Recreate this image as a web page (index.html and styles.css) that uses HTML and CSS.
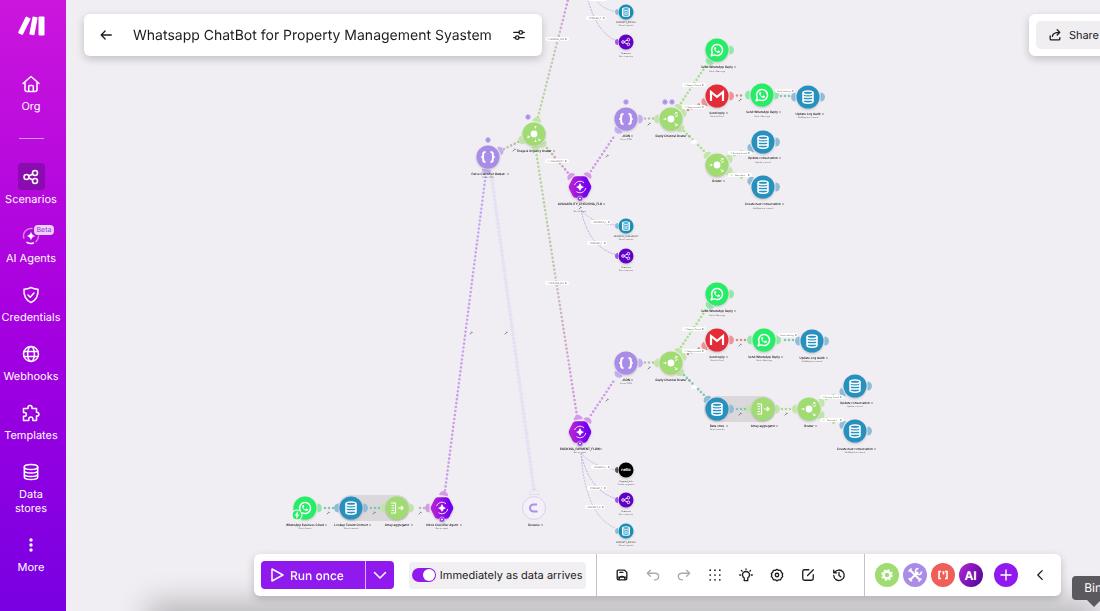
FILE: index.html
```
<!DOCTYPE html>
<html lang="en">

<head>
    <meta charset="utf-8">
    <meta name="viewport" content="width=device-width, initial-scale=1.0">
    <title>Whatsapp ChatBot for Property Management Syastem</title>
    <link rel="stylesheet" href="styles.css">
</head>

<body>

    <nav class="sidebar">
        <a class="logo" href="#" aria-label="Make">
            <svg width="27" height="20" viewBox="0 0 27 20"><path d="M7.5 1.2 Q8 .4 8.800 .7 L12 2.300 Q12.800 2.700 12.400 3.500 L5 18.300 Q4.500 19.200 3.700 18.800 L.6 17.200 Q-.1 16.800 .3 16z" /><path d="M14.500 1.200 Q14.700 .4 15.500 .5 L18.800 1.200 Q19.700 1.400 19.500 2.200 L16.500 18.500 Q16.300 19.300 15.400 19.200 L12 18.600 Q11.200 18.400 11.400 17.500z" /><rect x="20.500" y=".5" width="6" height="19" rx="1" /></svg>
        </a>
        <a class="item" href="#">
            <span class="icon"><svg viewBox="0 0 18 18"><path d="M1 8.500 9 1.500l8 7M3 7v7.500A2 2 0 0 0 5 16.500h8a2 2 0 0 0 2-2V7M6.700 16V11.500a1 1 0 0 1 1-1h2.600a1 1 0 0 1 1 1V16" /></svg></span>
            <span class="label">Org</span>
        </a>
        <hr>
        <a class="item active" href="#">
            <span class="icon"><svg viewBox="0 0 18 18"><circle cx="4.500" cy="9" r="2.500" /><circle cx="13" cy="5" r="2.500" /><circle cx="13" cy="13" r="2.500" /><path d="m6.800 8 4-2M6.800 10l4 2" /></svg></span>
            <span class="label">Scenarios</span>
        </a>
        <a class="item" href="#">
            <span class="icon"><svg viewBox="0 0 18 18"><path class="soft" d="M1.800 11A7.500 7.500 0 0 1 10 1.600" /><path class="soft" d="M16.500 9a7.500 7.500 0 0 1-2.500 5.600" /><path d="M11.500 16A7.500 7.500 0 0 1 5 15.300" /><path class="solid" d="M9 4.500q.6 3.900 4.500 4.500-3.900.6-4.500 4.500Q8.400 9.600 4.500 9 8.400 8.400 9 4.500z" /></svg><span class="beta">Beta</span></span>
            <span class="label">AI Agents</span>
        </a>
        <a class="item" href="#">
            <span class="icon"><svg viewBox="0 0 18 18"><path d="M9 1.500c2.500 1.300 4.500 1.600 7 1.700.4 5.500-1 10.500-7 13.300C3 13.700 1.600 8.700 2 3.200c2.500-.1 4.500-.4 7-1.700zM6 9l2.200 2.200L12 7" /></svg></span>
            <span class="label">Credentials</span>
        </a>
        <a class="item" href="#">
            <span class="icon"><svg viewBox="0 0 18 18"><circle cx="9" cy="9" r="7.500" /><ellipse cx="9" cy="9" rx="3.400" ry="7.500" /><path d="M2 6.500h14M2 11.500h14" /></svg></span>
            <span class="label">Webhooks</span>
        </a>
        <a class="item" href="#">
            <span class="icon"><svg viewBox="0 0 18 18"><path d="M1.500 4.500H6V3.400a2 2 0 0 1 4 0v1.100h4.500v3.800H15a1.900 1.900 0 0 1 0 3.800h-.5v4.400h-3.700V15a2 2 0 0 0-4 0v1.500H1.500v-4.200h1a1.900 1.900 0 0 0 0-3.800h-1z" /></svg></span>
            <span class="label">Templates</span>
        </a>
        <a class="item" href="#">
            <span class="icon"><svg viewBox="0 0 18 18"><ellipse cx="9" cy="4" rx="6.700" ry="2.500" /><path d="M2.300 4v10c0 1.400 3 2.500 6.700 2.500s6.700-1.100 6.700-2.500V4M2.300 7.500C2.300 8.900 5.300 10 9 10s6.700-1.100 6.700-2.500M2.300 11c0 1.400 3 2.500 6.700 2.500s6.700-1.100 6.700-2.500" /></svg></span>
            <span class="label">Data<br>stores</span>
        </a>
        <a class="item" href="#">
            <span class="icon"><svg viewBox="0 0 18 18"><circle class="solid" cx="9" cy="4" r="1.700" /><circle class="solid" cx="9" cy="9" r="1.700" /><circle class="solid" cx="9" cy="14" r="1.700" /></svg></span>
            <span class="label">More</span>
        </a>
    </nav>

    <main class="editor">

        <svg class="canvas" viewBox="66 0 1034 611" preserveAspectRatio="xMinYMin slice">
            <defs>
                <linearGradient id="agentFill"><stop offset="0" stop-color="#b01fd8" /><stop offset="1" stop-color="#7300f0" /></linearGradient>
                <linearGradient id="up" gradientUnits="userSpaceOnUse" x1="538" y1="117" x2="568" y2="0"><stop offset="0" stop-color="#b4dc98" /><stop offset="0.600" stop-color="#c9c2be" /><stop offset="1" stop-color="#d296e4" /></linearGradient>
                <linearGradient id="down" gradientUnits="userSpaceOnUse" x1="536" y1="150" x2="577" y2="418"><stop offset="0" stop-color="#b0dc92" /><stop offset="0.500" stop-color="#c8bcbc" /><stop offset="1" stop-color="#d296e4" /></linearGradient>
                <linearGradient id="toAgent" gradientUnits="userSpaceOnUse" x1="545" y1="147" x2="571" y2="175"><stop offset="0" stop-color="#b9c9a0" /><stop offset="1" stop-color="#cf86e4" /></linearGradient>
                <linearGradient id="long" gradientUnits="userSpaceOnUse" x1="486" y1="172" x2="445" y2="493"><stop offset="0" stop-color="#c3aaf0" /><stop offset="1" stop-color="#cf98e6" /></linearGradient>

                <path id="ear" d="M12.500-4.500a4.500 4.500 0 0 1 0 9z" />
                <path id="earSmall" d="M-8-3a3 3 0 0 0 0 6z" />
                <g id="braces">
                    <circle r="11.500" fill="#a98be8" />
                    <path class="bold" d="M-2.500-5q-2.300 0-2.300 2v1.500Q-4.800 0-6 0-4.800 0-4.800 1.500V3q0 2 2.300 2M2.500-5q2.300 0 2.300 2v1.500Q4.800 0 6 0 4.800 0 4.800 1.500V3q0 2-2.300 2" />
                </g>
                <g id="router">
                    <circle r="11.500" fill="#a0dc72" />
                    <circle r="3.400" fill="#fff" />
                    <path class="fine" d="M-7.500 0h2.500M-6-1l1.200 1L-6 1M3.500-4 6-6.500M4.200-6.500H6v1.700M4-2.500l3-1M3.500 4 6 6.500M4.200 6.500H6V4.800" />
                </g>
                <g id="routerDown">
                    <circle r="11.500" fill="#a0dc72" />
                    <circle r="3.400" fill="#fff" />
                    <path class="fine" d="M-7 3.500l2.200-1M-6.500 2l2 .4-.8 1.800M1.500-5.500v-2.500M.5-7l1-1 1 1M1.500 5.500v2.500M.5 7l1 1 1-1M4 4.500l1.800 1.800M4.500 6.500h1.500V5" />
                </g>
                <g id="whatsapp">
                    <circle r="11.500" fill="#25ee66" />
                    <path class="line" d="M-5.800 5.800-4.800 2.600A5.500 5.500 0 1 1-2.500 4.900z" />
                    <path fill="#fff" d="M-2-3q-1.200.6-.9 2Q-2.200 1.800.8 2.900q1.500.3 2.200-.9.200-.7-.2-.9L1.300.5.300 1.400Q-1 .8-1.500-.6l.8-.8-.6-1.500z" />
                </g>
                <g id="gmail">
                    <circle r="11.500" fill="#e42b38" />
                    <path d="M-6 5v-9L0 .8 6-4v9" fill="none" stroke="#fff" stroke-width="2.200" />
                </g>
                <g id="store">
                    <path class="line" d="M-5-4.200V4.300C-5 6.800 5 6.800 5 4.300V-4.200M-5-1.400C-5 .8 5 .8 5-1.400M-5 1.400C-5 3.600 5 3.600 5 1.400" />
                    <ellipse class="line" cy="-4.200" rx="5" ry="1.800" />
                </g>
                <g id="db"><circle r="11.500" fill="#2690bf" /><use href="#store" /></g>
                <g id="dbSmall"><circle r="7.500" fill="#158fb8" /><use href="#store" transform="scale(.7)" /></g>
                <g id="share">
                    <circle r="7.500" fill="#6200c8" />
                    <circle class="fine" cx="-3" r="1.300" /><circle class="fine" cx="2.400" cy="-2.300" r="1.300" /><circle class="fine" cx="2.400" cy="2.300" r="1.300" />
                    <path class="fine" d="m-1.800-.5 3-1.300M-1.800.5l3 1.300" />
                </g>
                <g id="aggregator">
                    <circle r="11.500" fill="#a0dc72" />
                    <path class="thin" d="M-6-5h4.500V5H-6M-5.500-2.500h2.500M-5.500 0h2.500M-5.500 2.500h2.500M1 0h5M4-2l2 2-2 2" />
                </g>
                <g id="agent">
                    <path d="M-7.500 0-4-7h8l3.500 7L4 7h-8z" fill="url(#agentFill)" stroke="url(#agentFill)" stroke-width="7.500" stroke-linejoin="round" />
                    <path class="fine" d="M-5.400-2A5.800 5.800 0 0 1 4-4.200M5.700 1A5.800 5.800 0 0 1-3.500 4.600" />
                    <path fill="#fff" d="M0-4Q.8-.8 4 0 .8.8 0 4-.8.800-4 0-.8-.8 0-4z" />
                    <circle cy="11.500" r="2.600" fill="#8e2be6" stroke="#e8d8fa" stroke-width=".5" />
                    <path class="fine" d="M-1 11.500h2M0 10.500v2" />
                </g>
                <g id="filterDot">
                    <circle r="2.200" fill="#c3b0f2" stroke="#a184ea" stroke-width=".8" />
                    <path d="m-.8-.8 1.600 1.600M.8-.8-.8.800" stroke="#7b55d8" stroke-width=".5" />
                </g>
                <path id="wrench" d="m-1.200 1.300 2-2M.4-1.300l1 1" stroke="#555" stroke-width=".8" />
                <g id="pill">
                    <rect x="-12" y="-2" width="24" height="4" rx="2" fill="#fff" />
                    <path d="M-9.500 0h2" stroke="#a9dc86" stroke-width=".8" /><path d="M8 0h1.500" stroke="#666" stroke-width="1" />
                </g>
                <g id="pillShort">
                    <rect x="-10" y="-2" width="20" height="4" rx="2" fill="#fff" />
                    <path d="M7 0h1.500" stroke="#666" stroke-width="1" />
                </g>
            </defs>

            <!-- grouped modules -->
            <rect class="group" x="338" y="495" width="72" height="26" rx="13" />
            <rect class="group" x="704" y="396" width="72" height="26" rx="13" />

            <!-- links -->
            <g class="links">
                <path d="M538 117 568 0" stroke="url(#up)" />
                <path d="m536 151 41 265" stroke="url(#down)" />
                <path d="m547 148 22 26" stroke="url(#toAgent)" />
                <path d="M486 173 445 491" stroke="url(#long)" />
                <path class="faint" d="m491 172 43 318" />
                <path class="olive" d="m504 149 16-8" />
                <path class="magenta" d="m591 171 24-36M591 415l24-36" />
                <path class="olive" d="M645 118.500h9M645 362.500h9M420 508h9" />
                <path class="lime" d="m681 103 26-39M681 347l26-39M684 131l22 22" />
                <path class="lime" d="M731 157l11-6M731 172l11 6M782 409h9M823 401l11-6M823 417l11 6" />
                <path class="rose" d="m688 110 12-6M688 354l12-6M737 95.500h8M737 340h9" />
                <path class="teal" d="M781 96h9M785 340h9M684 375l22 22M737 409h9M325 508h9M371 508h9" />
            </g>
            <g class="curves">
                <path class="blue" d="M581 210q12 14 36 15M581 453q10 13 36 17M590-8q10 18 28 20" />
                <path d="M581 210q8 38 36 45M581 453q8 38 36 46M588 0q9 33 29 41" />
                <path class="blue" d="M581 453q4 62 34 75" />
            </g>

            <!-- connectors round the modules -->
            <g fill="#c4aff0">
                <use href="#ear" transform="translate(488 157) rotate(-27)" /><use href="#ear" transform="translate(488 157) rotate(97)" />
                <use href="#ear" transform="translate(626 119)" /><use href="#ear" transform="translate(626 119) rotate(124)" />
                <use href="#ear" transform="translate(626 363)" /><use href="#ear" transform="translate(626 363) rotate(124)" />
            </g>
            <g fill="#c2e5a8">
                <use href="#ear" transform="translate(534 134) rotate(153)" /><use href="#ear" transform="translate(534 134) rotate(-78)" />
                <use href="#ear" transform="translate(534 134) rotate(49)" /><use href="#ear" transform="translate(534 134) rotate(82)" />
                <use href="#ear" transform="translate(671 119) rotate(180)" /><use href="#ear" transform="translate(671 119) rotate(-57)" />
                <use href="#ear" transform="translate(671 119) rotate(-27)" /><use href="#ear" transform="translate(671 119) rotate(45)" />
                <use href="#ear" transform="translate(671 363) rotate(180)" /><use href="#ear" transform="translate(671 363) rotate(-57)" />
                <use href="#ear" transform="translate(671 363) rotate(-27)" /><use href="#ear" transform="translate(671 363) rotate(45)" />
                <use href="#ear" transform="translate(717 165) rotate(225)" /><use href="#ear" transform="translate(717 165) rotate(-27)" /><use href="#ear" transform="translate(717 165) rotate(27)" />
                <use href="#ear" transform="translate(763 409) rotate(180)" /><use href="#ear" transform="translate(763 409)" />
                <use href="#ear" transform="translate(809 409) rotate(180)" /><use href="#ear" transform="translate(809 409) rotate(-27)" /><use href="#ear" transform="translate(809 409) rotate(27)" />
                <use href="#ear" transform="translate(397 508) rotate(180)" /><use href="#ear" transform="translate(397 508)" />
            </g>
            <g fill="#8eeaa8">
                <use href="#ear" transform="translate(717 50) rotate(123)" /><use href="#ear" transform="translate(717 50)" />
                <use href="#ear" transform="translate(762 95) rotate(180)" /><use href="#ear" transform="translate(762 95)" />
                <use href="#ear" transform="translate(717 294) rotate(123)" /><use href="#ear" transform="translate(717 294)" />
                <use href="#ear" transform="translate(764 340) rotate(180)" /><use href="#ear" transform="translate(764 340)" />
                <use href="#ear" transform="translate(305 508)" />
            </g>
            <g fill="#ee9298">
                <use href="#ear" transform="translate(717 96) rotate(153)" /><use href="#ear" transform="translate(717 96)" />
                <use href="#ear" transform="translate(717 340) rotate(153)" /><use href="#ear" transform="translate(717 340)" />
            </g>
            <g fill="#8fbdd8">
                <use href="#ear" transform="translate(808 97) rotate(180)" /><use href="#ear" transform="translate(808 97)" />
                <use href="#ear" transform="translate(763 142) rotate(153)" /><use href="#ear" transform="translate(763 142)" />
                <use href="#ear" transform="translate(763 187) rotate(-153)" /><use href="#ear" transform="translate(763 187)" />
                <use href="#ear" transform="translate(812 341) rotate(180)" /><use href="#ear" transform="translate(812 341)" />
                <use href="#ear" transform="translate(717 409) rotate(225)" /><use href="#ear" transform="translate(717 409)" />
                <use href="#ear" transform="translate(855 386) rotate(153)" /><use href="#ear" transform="translate(855 386)" />
                <use href="#ear" transform="translate(855 431) rotate(-153)" /><use href="#ear" transform="translate(855 431)" />
                <use href="#ear" transform="translate(351 508) rotate(180)" /><use href="#ear" transform="translate(351 508)" />
                <use href="#earSmall" x="626" y="12" /><use href="#earSmall" x="626" y="226" /><use href="#earSmall" x="626" y="531" />
            </g>
            <g fill="#d69ae8">
                <use href="#ear" transform="translate(580 187) rotate(-131)" /><use href="#ear" transform="translate(580 187) rotate(-56)" />
                <use href="#ear" transform="translate(580 432) rotate(-98)" /><use href="#ear" transform="translate(580 432) rotate(-56)" />
                <use href="#ear" transform="translate(442 508) rotate(180)" /><use href="#ear" transform="translate(442 508) rotate(-83)" />
            </g>
            <g fill="#9a5cd8">
                <use href="#earSmall" x="626" y="42" /><use href="#earSmall" x="626" y="256" /><use href="#earSmall" x="626" y="500" />
            </g>
            <use href="#earSmall" x="626" y="470" fill="#555" />

            <!-- modules -->
            <g class="modules">
                <use href="#braces" x="488" y="157" />
                <use href="#routerDown" x="534" y="134" />
                <use href="#agent" x="580" y="187" />
                <use href="#braces" x="626" y="119" />
                <use href="#router" x="671" y="119" />
                <use href="#whatsapp" x="717" y="50" />
                <use href="#gmail" x="717" y="96" />
                <use href="#whatsapp" x="762" y="95" />
                <use href="#db" x="808" y="97" />
                <use href="#router" x="717" y="165" />
                <use href="#db" x="763" y="142" />
                <use href="#db" x="763" y="187" />
                <use href="#dbSmall" x="626" y="12" />
                <use href="#share" x="626" y="42" />
                <use href="#dbSmall" x="626" y="226" />
                <use href="#share" x="626" y="256" />
                <use href="#agent" x="580" y="432" />
                <use href="#braces" x="626" y="363" />
                <use href="#router" x="671" y="363" />
                <use href="#whatsapp" x="717" y="294" />
                <use href="#gmail" x="717" y="340" />
                <use href="#whatsapp" x="764" y="340" />
                <use href="#db" x="812" y="341" />
                <use href="#db" x="717" y="409" />
                <use href="#aggregator" x="763" y="409" />
                <use href="#router" x="809" y="409" />
                <use href="#db" x="855" y="386" />
                <use href="#db" x="855" y="431" />
                <circle cx="626" cy="470" r="7.500" />
                <use href="#share" x="626" y="500" />
                <use href="#dbSmall" x="626" y="531" />
                <use href="#whatsapp" x="305" y="508" />
                <use href="#db" x="351" y="508" />
                <use href="#aggregator" x="397" y="508" />
                <use href="#agent" x="442" y="508" />
            </g>
            <text class="brand" x="626" y="471">nello</text>
            <circle cx="297" cy="515" r="5" fill="#25ee66" stroke="#fff" />
            <path d="m298 511-3.500 4.500h2L296 519l3.500-4.500h-2z" fill="#fff" />
            <circle cx="534" cy="508" r="11.500" fill="#f3f0f7" stroke="#d9cff4" />
            <path d="M537 504.500h-3.500a3.500 3.500 0 0 0 0 7h4" fill="none" stroke="#ab90e8" stroke-width="2" />
            <path d="M529 494.500a5 5 0 0 1 10 0z" fill="none" stroke="#ddd6f3" stroke-width=".7" />

            <use href="#filterDot" x="488" y="140" /><use href="#filterDot" x="528" y="117" /><use href="#filterDot" x="626" y="102" />
            <use href="#filterDot" x="665" y="102" /><use href="#filterDot" x="672" y="102" />

            <use href="#wrench" x="514" y="150" /><use href="#wrench" x="607" y="156" /><use href="#wrench" x="649" y="124" /><use href="#wrench" x="740" y="100" />
            <use href="#wrench" x="607" y="400" /><use href="#wrench" x="649" y="368" /><use href="#wrench" x="740" y="345" /><use href="#wrench" x="740" y="414" />
            <use href="#wrench" x="786" y="414" /><use href="#wrench" x="328" y="513" /><use href="#wrench" x="374" y="513" /><use href="#wrench" x="420" y="513" />
            <use href="#wrench" x="471" y="333" /><use href="#wrench" x="506" y="333" /><use href="#wrench" x="580" y="208" />

            <!-- route filters -->
            <g class="filters">
                <use href="#pill" x="557" y="39" /><text x="557" y="40">GENERAL_FAQ</text>
                <use href="#pill" x="557" y="161" /><text x="557" y="162">AVAILABILITY</text>
                <use href="#pill" x="557" y="283" /><text x="557" y="284">BOOKING_PAY</text>
                <use href="#pill" x="694" y="85" /><text x="694" y="86">Region Choice</text>
                <use href="#pill" x="694" y="107" /><text x="694" y="108">Region Invalid</text>
                <use href="#pill" x="740" y="153" /><text x="740" y="154">Existing thread</text>
                <use href="#pill" x="740" y="175" /><text x="740" y="176">New client</text>
                <use href="#pill" x="694" y="329" /><text x="694" y="330">Region Choice</text>
                <use href="#pill" x="694" y="351" /><text x="694" y="352">Region Invalid</text>
                <use href="#pill" x="832" y="397" /><text x="832" y="398">Existing thread</text>
                <use href="#pill" x="832" y="420" /><text x="832" y="421">New client</text>
                <use href="#pillShort" x="785" y="91" /><text x="784" y="92">Send audit log</text>
                <use href="#pillShort" x="788" y="335" /><text x="787" y="336">Send audit log</text>
                <use href="#pillShort" x="597" y="-1" />
                <use href="#pillShort" x="596" y="18" /><text x="595" y="19">SCENARIO_T</text>
                <use href="#pillShort" x="601" y="222" /><text x="600" y="223">PROPERTY_A</text>
                <use href="#pillShort" x="597" y="243" /><text x="596" y="244">SCENARIO_T</text>
                <use href="#pillShort" x="601" y="467" /><text x="600" y="468">PAYMENT_L</text>
                <use href="#pillShort" x="597" y="488" /><text x="596" y="489">SCENARIO_T</text>
                <use href="#pillShort" x="595" y="507" /><text x="594" y="508">PROPERTY_D</text>
                <rect x="691" y="140" width="6" height="4" rx="2" fill="#fff" /><rect x="691" y="385" width="6" height="4" rx="2" fill="#fff" />
            </g>

            <g class="names">
                <text x="488" y="175">Parse Classifier Output</text>
                <text x="534" y="152">Triage &amp; Urgency Router</text>
                <text x="580" y="205">AVAILABILITY_CHECKING_FLO</text>
                <text x="626" y="137">JSON</text>
                <text x="671" y="137">Reply Channel Router</text>
                <text x="717" y="68">Send WhatsApp Reply</text>
                <text x="717" y="114">Send reply</text>
                <text x="762" y="113">Send WhatsApp Reply</text>
                <text x="808" y="115">Update Log Audit</text>
                <text x="717" y="182">Router</text>
                <text x="763" y="159">Update conversation</text>
                <text x="763" y="205">Create new conversation</text>
                <text x="580" y="450">BOOKING_PAYMENT_FLOW</text>
                <text x="626" y="381">JSON</text>
                <text x="671" y="381">Reply Channel Router</text>
                <text x="717" y="312">Send WhatsApp Reply</text>
                <text x="717" y="358">Send reply</text>
                <text x="764" y="358">Send WhatsApp Reply</text>
                <text x="812" y="359">Update Log Audit</text>
                <text x="717" y="427">Data store</text>
                <text x="763" y="427">Array aggregator</text>
                <text x="809" y="427">Router</text>
                <text x="855" y="404">Update conversation</text>
                <text x="855" y="450">Create new conversation</text>
                <text x="305" y="526">WhatsApp Business Cloud</text>
                <text x="351" y="526">Lookup Tenant Context</text>
                <text x="397" y="526">Array aggregator</text>
                <text x="442" y="526">Inbox Classifier Agent</text>
                <text x="534" y="526">Resume</text>
            </g>
            <g class="kinds">
                <text x="488" y="178">Parse JSON</text>
                <text x="580" y="212">Run an agent</text>
                <text x="626" y="140">Parse JSON</text>
                <text x="717" y="72">Send a Message</text>
                <text x="717" y="117">Send an Email</text>
                <text x="762" y="117">Send a Message</text>
                <text x="808" y="118">Add/Replace a record</text>
                <text x="763" y="163">Update a record</text>
                <text x="763" y="209">Add/Replace a record</text>
                <text x="580" y="453">Run an agent</text>
                <text x="626" y="384">Parse JSON</text>
                <text x="717" y="316">Send a Message</text>
                <text x="717" y="361">Send an Email</text>
                <text x="764" y="361">Send a Message</text>
                <text x="812" y="362">Add/Replace a record</text>
                <text x="717" y="430">Search records</text>
                <text x="855" y="407">Update a record</text>
                <text x="855" y="453">Add/Replace a record</text>
                <text x="305" y="529">Watch Events</text>
                <text x="351" y="529">Search records</text>
                <text x="442" y="529">Run an agent</text>
                <text class="dark" x="626" y="23">PROPERTY_DETAILS</text><text x="626" y="26">Search records</text>
                <text class="dark" x="626" y="54">Scenarios</text><text x="626" y="57">Run a scenario</text>
                <text class="dark" x="626" y="237">PROPERTY_AVAILABILITY</text><text x="626" y="240">Search records</text>
                <text class="dark" x="626" y="268">Scenarios</text><text x="626" y="271">Run a scenario</text>
                <text class="dark" x="626" y="482">Payment_Link</text><text x="626" y="485">Create a payment</text>
                <text class="dark" x="626" y="512">Scenarios</text><text x="626" y="515">Run a scenario</text>
                <text class="dark" x="626" y="543">PROPERTY_DETAILS</text><text x="626" y="546">Search records</text>
            </g>
            <path class="ids" d="M507 174h2M553 151h2M603 204h2M631 136h2M688 136h2M734 67h2M726 113h2M779 112h2M822 114h2M723 181h2M779 158h2M782 204h2M600 449h2M631 380h2M688 380h2M734 311h2M726 357h2M781 357h2M826 358h2M726 426h2M776 426h2M815 426h2M871 403h2M874 449h2M325 525h2M369 525h2M411 525h2M460 525h2M541 525h2" />
        </svg>

        <div class="shade"></div>

        <header class="topbar">
            <div class="card title-card">
                <button class="tool" aria-label="Back"><svg viewBox="0 0 16 16"><path d="M14 8H2.500M7 3.500 2.500 8 7 12.500" /></svg></button>
                <h1>Whatsapp ChatBot for Property Management Syastem</h1>
                <button class="tool" aria-label="Scenario settings"><svg viewBox="0 0 16 16"><path d="M2 5H8M12 5h2M2 11H4M8 11h6" /><circle cx="10" cy="5" r="2" /><circle cx="6" cy="11" r="2" /></svg></button>
            </div>
            <div class="card share-card">
                <button class="share"><svg viewBox="0 0 16 16"><path d="M2.500 9v3.500a1 1 0 0 0 1 1h9a1 1 0 0 0 1-1V11M5 9.500q.5-4.500 8-4.500M10.500 2l3 3-3 3" /></svg>Share</button>
            </div>
        </header>

        <footer class="card toolbar">
            <div class="section run">
                <div class="split">
                    <button class="run-once"><svg viewBox="0 0 16 16"><path d="M3 2v12l11-6z" /></svg>Run once</button>
                    <button class="run-more" aria-label="Run options"><svg viewBox="0 0 16 16"><path d="m2.500 5.500 5.500 5.500 5.500-5.500" /></svg></button>
                </div>
                <label class="schedule"><input type="checkbox" checked>Immediately as data arrives</label>
            </div>
            <div class="section tools">
                <button class="tool" aria-label="Save"><svg viewBox="0 0 16 16"><path d="M3.500 2.500h7.500l2.500 2.500v7a1.500 1.500 0 0 1-1.500 1.500H4A1.500 1.500 0 0 1 2.500 12V3.500a1 1 0 0 1 1-1zM5.500 5H9M4.500 13q0-3.500 3.500-3.500t3.500 3.500M4 10.500h8" /></svg></button>
                <button class="tool" aria-label="Undo" disabled><svg viewBox="0 0 16 16"><path d="M5 2.500 1.500 6 5 9.500M1.500 6H10.500q4 .3 4 3.700t-4 3.800H9.500" /></svg></button>
                <button class="tool" aria-label="Redo" disabled><svg viewBox="0 0 16 16"><path d="M11 2.500 14.500 6 11 9.500M14.500 6H5.500q-4 .3-4 3.700t4 3.800h1" /></svg></button>
                <button class="tool" aria-label="Auto-align"><svg viewBox="0 0 16 16"><path class="dots" d="M2.500 2.500h0M8 2.500h0M13.500 2.500h0M2.500 8h0M8 8h0M13.500 8h0M2.500 13.500h0M8 13.500h0M13.500 13.500h0" /></svg></button>
                <button class="tool" aria-label="Explain flow"><svg viewBox="0 0 16 16"><path d="M6 11.500Q4 10 4 8a4 4 0 0 1 8 0q0 2-2 3.500V14.500H6zM8 1v.8M.8 8h1.200M14 8h1.200M2.800 2.800l.8.800M13.200 2.800l-.8.800" /></svg></button>
                <button class="tool" aria-label="Settings"><svg viewBox="0 0 16 16"><path d="m8 1.500 1.900 1.200 2.200.1.900 2.100 1.500 1.600L14 8l.5 1.800-1.500 1.500-.9 2.100-2.200.1L8 14.700l-1.900-1.200-2.200-.1-.9-2.100-1.500-1.500L2 8l-.5-1.700L3 4.900l.9-2.100 2.200-.1z" /><circle cx="8" cy="8" r="2" /></svg></button>
                <button class="tool" aria-label="Notes"><svg viewBox="0 0 16 16"><path d="M9 2H4A2 2 0 0 0 2 4v8A2 2 0 0 0 4 14h8a2 2 0 0 0 2-2V7.500M7.500 8.500 14 2" /></svg></button>
                <button class="tool" aria-label="History"><svg viewBox="0 0 16 16"><path d="M3 5A6 6 0 1 1 2 8.500M2 2.500v3h3.200M8 5v3.500l2 1.500" /></svg></button>
            </div>
            <div class="section apps">
                <button class="app green" aria-label="Flow control"><svg viewBox="0 0 24 24"><circle cx="12" cy="12" r="3.500" fill="none" stroke="#fff" stroke-width="2.400" /><circle cx="12" cy="12" r="5" fill="none" stroke="#fff" stroke-width="1.600" stroke-dasharray="2 1.930" /></svg></button>
                <button class="app lilac" aria-label="Tools"><svg viewBox="0 0 24 24"><path d="m7 7 10 10M6.500 17.500 15 9" fill="none" stroke="#fff" stroke-width="2" /><path d="M18.500 8.500A3 3 0 1 1 15.500 5.500M5.500 8.500l3-3M15.500 18.500l3-3M8.500 18.500A3 3 0 0 0 5.500 15.500" fill="none" stroke="#fff" stroke-width="1.600" /></svg></button>
                <button class="app red" aria-label="Text parser"><svg viewBox="0 0 24 24"><path d="M10 8.500H8v7h2M14 8.500h2v7h-2M11.500 9H12.500v2.500" fill="none" stroke="#fff" stroke-width="1.600" /></svg></button>
                <button class="app violet">AI</button>
                <button class="app add" aria-label="Add app"><svg viewBox="0 0 24 24"><path d="M12 6.500v11M6.500 12h11" fill="none" stroke="#fff" stroke-width="1.400" /></svg></button>
                <button class="tool" aria-label="Collapse"><svg viewBox="0 0 16 16"><path d="M10.500 3 5.500 8l5 5" /></svg></button>
            </div>
        </footer>

        <div class="tooltip" role="tooltip">Bin</div>
    </main>

</body>

</html>
```
FILE: styles.css
```
* {
    box-sizing: border-box;
}

body {
    margin: 0;
    display: flex;
    min-height: 100vh;
    overflow: hidden;
    background-color: #f0eef2;
    font-family: Inter, sans-serif;
    color: #1c1b1f;
    text-rendering: geometricPrecision;
}

button {
    border: none;
    background: none;
    padding: 0;
    font-family: inherit;
    color: inherit;
    text-rendering: inherit;
}

svg {
    display: block;
}

/* sidebar */
.sidebar {
    flex: none;
    width: 66px;
    padding: 16px 4px 16px 0;
    display: flex;
    flex-direction: column;
    align-items: center;
    gap: 16px;
    background: linear-gradient(#cb16dc, #a800e0 50%, #7800e2);
}

.logo {
    margin-bottom: 18px;
}

.logo svg {
    fill: #fff;
}

.item {
    width: 62px;
    display: flex;
    flex-direction: column;
    align-items: center;
    gap: 2px;
    color: #fff;
    font-size: 11px;
    line-height: 14px;
    text-align: center;
    text-decoration: none;
}

.icon {
    position: relative;
    width: 27px;
    height: 27px;
    display: flex;
    align-items: center;
    justify-content: center;
    border-radius: 4px;
}

.icon svg {
    width: 18px;
    height: 18px;
    fill: none;
    stroke: #fff;
    stroke-width: 1.5;
    stroke-linecap: round;
    stroke-linejoin: round;
}

.icon .solid {
    fill: #fff;
    stroke: none;
}

.icon .soft {
    opacity: 0.5;
}

.active .icon {
    background-color: #8a0cb0;
}

.beta {
    position: absolute;
    left: 16px;
    top: 3px;
    padding: 0 3px;
    border-radius: 4px;
    background-color: #ead2fa;
    color: #a030e0;
    font-size: 7px;
    line-height: 10px;
}

.sidebar hr {
    width: 25px;
    margin: 9px 0 8px;
    border: none;
    border-top: 1px solid #e08cf0;
}

/* canvas */
.editor {
    position: relative;
    flex: 1;
    overflow: hidden;
    display: flex;
    flex-direction: column;
    justify-content: space-between;
}

.canvas {
    position: absolute;
    left: 0;
    top: 0;
    width: 100%;
    height: 100%;
}

.canvas .line,
.canvas .bold,
.canvas .thin,
.canvas .fine {
    fill: none;
    stroke: #fff;
    stroke-width: 1.5;
    stroke-linejoin: round;
}

.canvas .bold {
    stroke-width: 2;
}

.canvas .thin {
    stroke-width: 1.2;
}

.canvas .fine {
    stroke-width: 0.9;
}

.group {
    fill: #dad8da;
}

.modules {
    filter: drop-shadow(0 1px 1px rgba(0, 0, 0, 0.2));
}

.links path {
    fill: none;
    stroke-width: 2.6;
    stroke-linecap: round;
    stroke-dasharray: 0 4;
}

.links .faint {
    stroke: #e5e1f3;
    stroke-width: 4;
}

.links .olive {
    stroke: #b9bfb0;
}

.links .magenta {
    stroke: #d09ae8;
}

.links .lime {
    stroke: #a6e090;
}

.links .rose {
    stroke: #d0908c;
}

.links .teal {
    stroke: #86c4b4;
}

.curves path {
    fill: none;
    stroke: #d0a4e6;
    stroke-dasharray: 2 1;
}

.curves .blue {
    stroke: #bdc0e0;
}

.canvas text {
    text-anchor: middle;
}

.names text {
    font-size: 3px;
    font-weight: 500;
}

.kinds text,
.filters text {
    font-size: 2px;
    fill: #555;
}

.kinds .dark {
    fill: #111;
}

.canvas .brand {
    font-size: 4px;
    font-weight: 700;
    fill: #fff;
}

.ids {
    stroke: #888;
}

.shade {
    position: absolute;
    left: 90px;
    right: 10px;
    top: 100%;
    height: 20px;
    box-shadow: 0 0 30px 8px rgba(0, 0, 0, 0.25);
}

/* floating bars */
.card {
    position: relative;
    display: flex;
    align-items: center;
    height: 42px;
    border-radius: 6px;
    background-color: #fff;
    box-shadow: 0 3px 8px rgba(0, 0, 0, 0.2);
}

.topbar {
    display: flex;
    justify-content: space-between;
    padding: 14px 0 0 18px;
}

.title-card {
    padding: 0 15px 0 14px;
}

.title-card h1 {
    margin: 0 19px;
    font-size: 14px;
    font-weight: 400;
    white-space: nowrap;
}

.tool {
    width: 16px;
    height: 16px;
    display: flex;
    align-items: center;
    justify-content: center;
}

.tool svg,
.share svg,
.split svg {
    width: 14px;
    height: 14px;
    fill: none;
    stroke: currentColor;
    stroke-width: 1.5;
    stroke-linecap: round;
    stroke-linejoin: round;
}

.split svg {
    width: 16px;
    height: 16px;
}

.tool .dots {
    stroke-width: 2;
}

.tool:disabled {
    color: #aaa;
}

.share-card {
    margin-right: -18px;
    padding: 0 7px;
}

.share {
    display: flex;
    align-items: center;
    gap: 7px;
    height: 28px;
    padding: 0 12px;
    border-radius: 5px;
    background-color: #f0eef1;
    font-size: 11px;
}

.toolbar {
    align-self: flex-start;
    margin: 0 0 15px 188px;
}

.section {
    display: flex;
    align-items: center;
    height: 100%;
}

.section + .section {
    border-left: 1px solid #c4c2c6;
}

.run {
    gap: 15px;
    padding: 0 10px 0 7px;
}

.split {
    display: flex;
    height: 28px;
    border-radius: 4px;
    overflow: hidden;
    background-color: #901aee;
    color: #fff;
}

.run-once {
    display: flex;
    align-items: center;
    gap: 5px;
    padding: 0 21px 0 8px;
    font-size: 12px;
    font-weight: 500;
}

.run-more {
    padding: 0 6px;
    border-left: 1px solid #d9b0fa;
}

.schedule {
    display: flex;
    align-items: center;
    gap: 4px;
    height: 27px;
    padding: 0 3px;
    border-radius: 4px;
    background-color: #f1eff2;
    font-size: 11px;
}

.schedule input {
    appearance: none;
    width: 24px;
    height: 14px;
    margin: 0;
    padding: 1px;
    border-radius: 7px;
    background-color: #901aee;
}

.schedule input::before {
    content: "";
    display: block;
    width: 12px;
    height: 12px;
    border-radius: 6px;
    background-color: #fff;
}

.schedule input:checked::before {
    margin-left: auto;
}

.tools {
    gap: 15px;
    padding: 0 17px;
}

.apps {
    gap: 4px;
    padding: 0 13px 0 10px;
}

.app {
    width: 24px;
    height: 24px;
    border-radius: 50%;
    color: #fff;
    font-size: 12px;
    font-weight: 700;
}

.green {
    background-color: #a0dc72;
}

.lilac {
    background-color: #a98be8;
}

.red {
    background-color: #ef5f58;
}

.violet {
    background: linear-gradient(120deg, #b428d8, #4b0496);
}

.add {
    margin: 0 10px 0 7px;
    background-color: #901aee;
}

.tooltip {
    position: absolute;
    right: -14px;
    bottom: 11px;
    padding: 0 12px;
    border-radius: 4px;
    background-color: #5b595d;
    color: #fff;
    font-size: 12px;
    line-height: 24px;
}

.tooltip::after {
    content: "";
    position: absolute;
    left: 15px;
    top: 100%;
    border: 7px solid transparent;
    border-top-color: #5b595d;
    border-bottom: none;
}
```
